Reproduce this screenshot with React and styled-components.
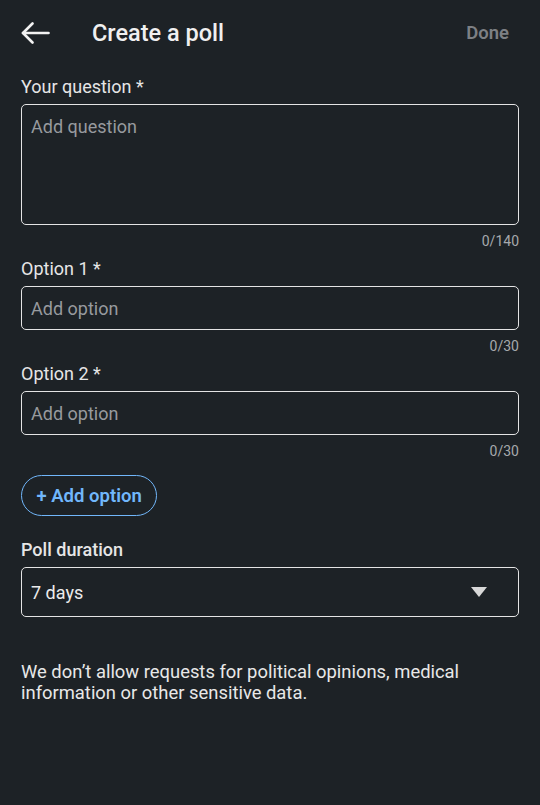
import React from "react";
import styled, { createGlobalStyle } from "styled-components";

const Global = createGlobalStyle`
  html, body { margin: 0; padding: 0; background: #1d2226; }
  body { font-family: Roboto, "Noto Sans", "Liberation Sans", sans-serif; }
  * { box-sizing: border-box; }
`;

const Page = styled.div`
  width: 540px;
  min-height: 805px;
  background: #1d2226;
  color: #e9e9e9;
  padding: 0 21px;
  display: flex;
  flex-direction: column;
`;

const Header = styled.header`
  height: 66px;
  margin-bottom: 10px;
  display: flex;
  align-items: center;
`;

const BackButton = styled.button`
  background: none;
  border: none;
  padding: 0;
  width: 29px;
  height: 24px;
  display: flex;
  align-items: center;
  color: #f2f2f2;
  margin-right: 42px;
`;

const Title = styled.h1`
  margin: 0;
  font-size: 23.5px;
  font-weight: 500;
  color: #f0f0f0;
  flex: 1;
`;

const Done = styled.span`
  font-size: 18.5px;
  font-weight: 600;
  color: #7d8084;
  margin-right: 10px;
`;

const Field = styled.div`
  display: flex;
  flex-direction: column;
`;

const Label = styled.label`
  font-size: 18px;
  font-weight: ${(p) => (p.$bold ? 500 : 400)};
  color: #e6e6e6;
  line-height: 22px;
  margin-bottom: 6px;
`;

const Box = styled.div`
  border: 1.5px solid #e4e4e4;
  border-radius: 5px;
  height: ${(p) => p.$h}px;
  padding: ${(p) => (p.$tall ? "11px 9px" : "0 9px")};
  display: flex;
  align-items: ${(p) => (p.$tall ? "flex-start" : "center")};
  font-size: 18px;
  color: ${(p) => (p.$value ? "#ececec" : "#979a9e")};
`;

const Counter = styled.div`
  text-align: right;
  font-size: 14px;
  color: #a6a9ac;
  line-height: 18px;
  margin-top: 7px;
  margin-bottom: 8px;
`;

const AddButton = styled.button`
  align-self: flex-start;
  height: 41px;
  padding: 0 14.5px;
  border: 1.5px solid #71b7fb;
  border-radius: 21px;
  background: transparent;
  color: #71b7fb;
  font-family: inherit;
  font-size: 18.5px;
  font-weight: 600;
  margin-top: 7px;
  margin-bottom: 23px;
`;

const Caret = styled.span`
  margin-left: auto;
  margin-right: 22px;
  width: 0;
  height: 0;
  border-left: 8.5px solid transparent;
  border-right: 8.5px solid transparent;
  border-top: 10px solid #d8d8d8;
`;

const Notice = styled.p`
  margin: 44px 0 0;
  font-size: 18.4px;
  line-height: 21px;
  color: #e8e8e8;
`;

export default function App() {
  return (
    <>
      <Global />
      <Page>
        <Header>
          <BackButton aria-label="Back">
            <svg width="29" height="22" viewBox="0 0 29 22" fill="none" stroke="currentColor" strokeWidth="2.6" strokeLinecap="round" strokeLinejoin="round">
              <path d="M27.5 11H2" />
              <path d="M11.5 1.5L2 11l9.5 9.5" />
            </svg>
          </BackButton>
          <Title>Create a poll</Title>
          <Done>Done</Done>
        </Header>

        <Field>
          <Label>Your question *</Label>
          <Box $h={121} $tall>Add question</Box>
          <Counter>0/140</Counter>
        </Field>

        <Field>
          <Label>Option 1 *</Label>
          <Box $h={44}>Add option</Box>
          <Counter>0/30</Counter>
        </Field>

        <Field>
          <Label>Option 2 *</Label>
          <Box $h={44}>Add option</Box>
          <Counter>0/30</Counter>
        </Field>

        <AddButton>+ Add option</AddButton>

        <Field>
          <Label $bold>Poll duration</Label>
          <Box $h={50} $value>
            7 days
            <Caret />
          </Box>
        </Field>

        <Notice>
          We don’t allow requests for political opinions, medical information or other sensitive data.
        </Notice>
      </Page>
    </>
  );
}
